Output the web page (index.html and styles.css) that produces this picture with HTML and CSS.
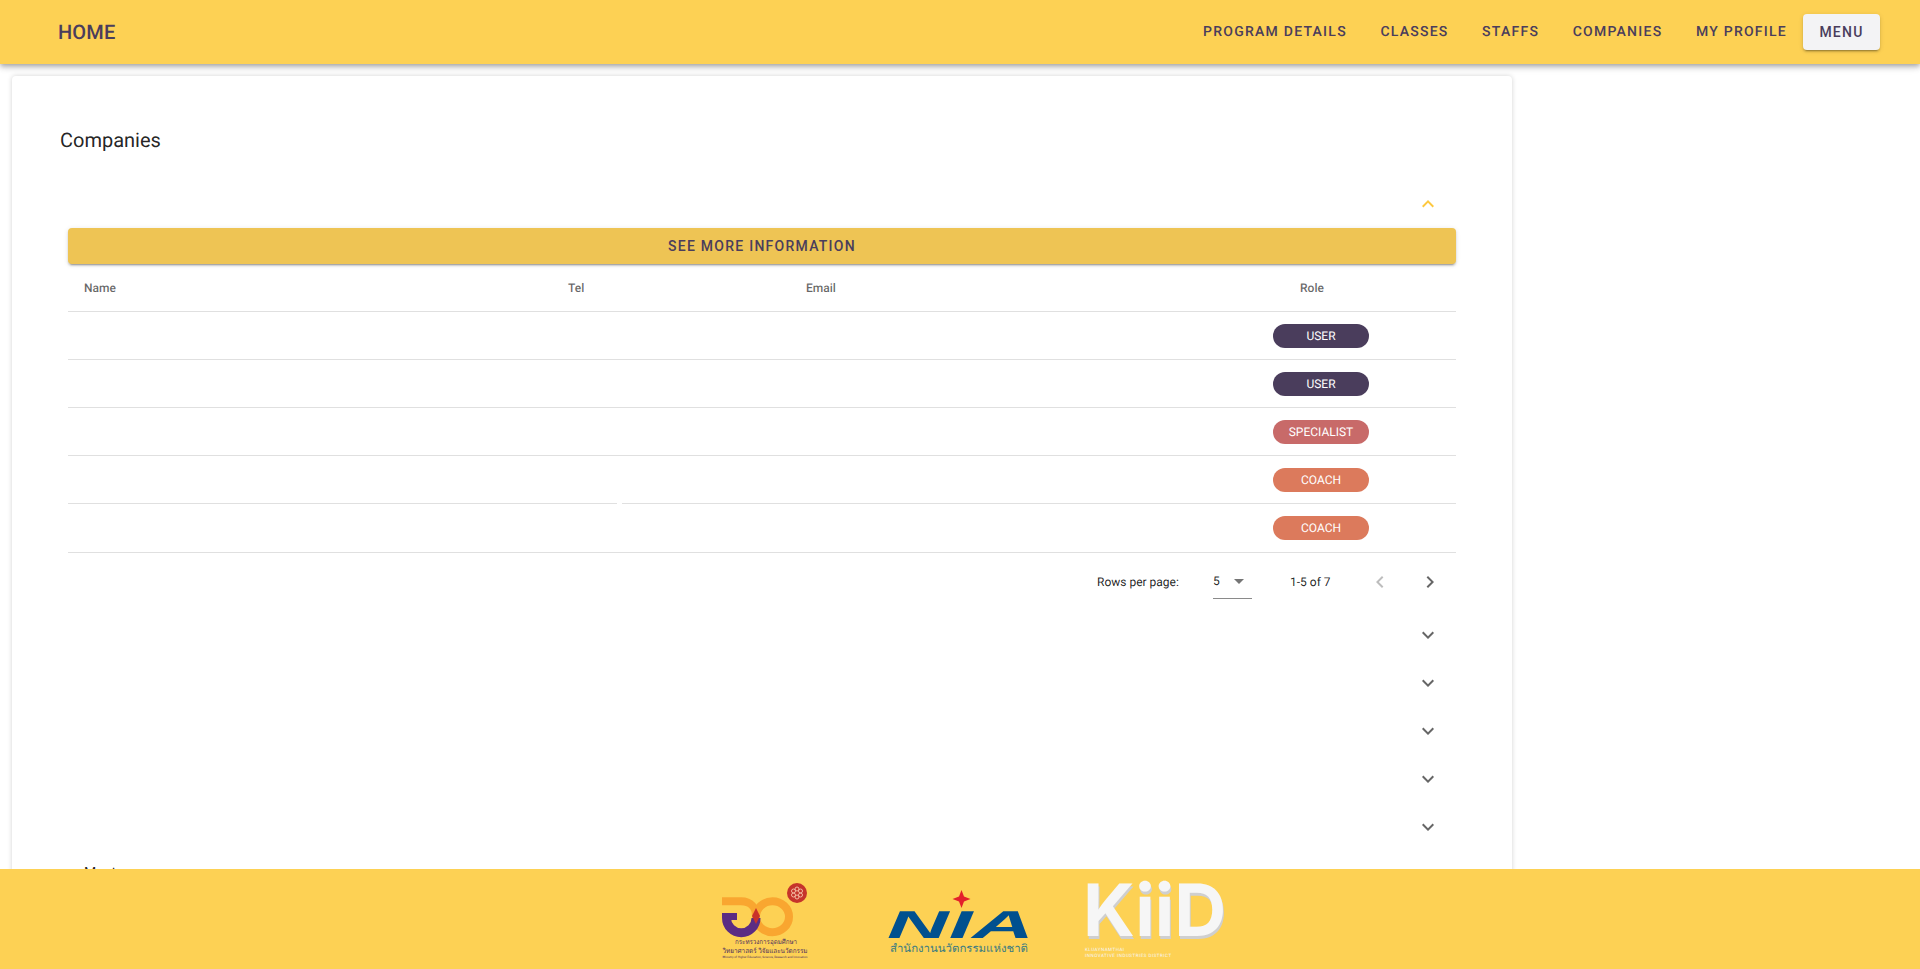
FILE: index.html

```html
<!DOCTYPE html>
<html lang="en">
<head>
  <meta charset="UTF-8" />
  <title>Companies</title>
  <link rel="stylesheet" href="styles.css">
</head>
<body>
  <div class="app">
    <header class="appbar">
      <a class="brand">HOME</a>
      <nav class="nav">
        <a>PROGRAM DETAILS</a>
        <a>CLASSES</a>
        <a>STAFFS</a>
        <a>COMPANIES</a>
        <a>MY PROFILE</a>
        <button class="menu-btn">MENU</button>
      </nav>
    </header>

    <main class="content">
      <section class="card">
        <h2 class="card-title">Companies</h2>

        <div class="acc-head">
          <svg class="chev chev-open" viewBox="0 0 24 24"><path d="M7.41 15.41 12 10.83l4.59 4.58L18 14l-6-6-6 6z"/></svg>
        </div>

        <div class="acc-body">
          <button class="more-btn">SEE MORE INFORMATION</button>
          <table class="people">
            <colgroup>
              <col class="col-name">
              <col class="col-tel">
              <col class="col-email">
              <col class="col-role">
            </colgroup>
            <thead>
              <tr><th>Name</th><th>Tel</th><th>Email</th><th class="role-head">Role</th></tr>
            </thead>
            <tbody>
              <tr><td></td><td></td><td></td><td><span class="chip chip-user">USER</span></td></tr>
              <tr><td></td><td></td><td></td><td><span class="chip chip-user">USER</span></td></tr>
              <tr><td></td><td></td><td></td><td><span class="chip chip-specialist">SPECIALIST</span></td></tr>
              <tr class="row-gap"><td></td><td></td><td></td><td><span class="chip chip-coach">COACH</span></td></tr>
              <tr><td></td><td></td><td></td><td><span class="chip chip-coach">COACH</span></td></tr>
            </tbody>
          </table>

          <div class="pager">
            <span class="pager-label">Rows per page:</span>
            <span class="pager-select">5
              <svg class="caret" viewBox="0 0 24 24"><path d="M7 10l5 5 5-5z"/></svg>
            </span>
            <span class="pager-count">1-5 of 7</span>
            <svg class="page-arrow page-off" viewBox="0 0 24 24"><path d="M15.41 7.41 14 6l-6 6 6 6 1.41-1.41L10.83 12z"/></svg>
            <svg class="page-arrow" viewBox="0 0 24 24"><path d="M10 6 8.59 7.41 13.17 12l-4.58 4.59L10 18l6-6z"/></svg>
          </div>
        </div>

        <div class="acc-head"><svg class="chev" viewBox="0 0 24 24"><path d="M16.59 8.59 12 13.17 7.41 8.59 6 10l6 6 6-6z"/></svg></div>
        <div class="acc-head"><svg class="chev" viewBox="0 0 24 24"><path d="M16.59 8.59 12 13.17 7.41 8.59 6 10l6 6 6-6z"/></svg></div>
        <div class="acc-head"><svg class="chev" viewBox="0 0 24 24"><path d="M16.59 8.59 12 13.17 7.41 8.59 6 10l6 6 6-6z"/></svg></div>
        <div class="acc-head"><svg class="chev" viewBox="0 0 24 24"><path d="M16.59 8.59 12 13.17 7.41 8.59 6 10l6 6 6-6z"/></svg></div>
        <div class="acc-head"><svg class="chev" viewBox="0 0 24 24"><path d="M16.59 8.59 12 13.17 7.41 8.59 6 10l6 6 6-6z"/></svg></div>

        <p class="next-title">Mentors</p>
      </section>
    </main>

    <footer class="footer">
      <svg class="logo-mhesi" viewBox="0 0 92 80">
        <circle cx="77" cy="13" r="10" fill="#c6342b"/>
        <g fill="none" stroke="#f3b9a0" stroke-width="1">
          <circle cx="77" cy="9" r="2"/><circle cx="73.5" cy="11" r="2"/><circle cx="80.5" cy="11" r="2"/>
          <circle cx="73.5" cy="15" r="2"/><circle cx="80.5" cy="15" r="2"/><circle cx="77" cy="17" r="2"/>
        </g>
        <ellipse cx="52.5" cy="36.7" rx="16.5" ry="15.5" fill="none" stroke="#f9a630" stroke-width="8"/>
        <path d="M2 21.3H21C31 21.3 36 28 36 36" fill="none" stroke="#f9a630" stroke-width="8"/>
        <path d="M6.5 33V38A14.5 14.5 0 0 0 36 38" fill="none" stroke="#5b2c83" stroke-width="9"/>
        <path d="M2 33H17V40H10V33Z" fill="#5b2c83"/>
        <path d="M36 28L40 36L36 44L32 36Z" fill="#c9322a"/>
        <text class="mhesi-th" x="46" y="64" textLength="62" lengthAdjust="spacingAndGlyphs">กระทรวงการอุดมศึกษา</text>
        <text class="mhesi-th" x="45" y="73" textLength="85" lengthAdjust="spacingAndGlyphs">วิทยาศาสตร์ วิจัยและนวัตกรรม</text>
        <text class="mhesi-en" x="45" y="78" textLength="85" lengthAdjust="spacingAndGlyphs">Ministry of Higher Education, Science, Research and Innovation</text>
      </svg>

      <svg class="logo-nia" viewBox="0 0 142 75">
        <path d="M73.5 6L76 12.5L82.5 15L76 17.5L73.5 24L71 17.5L64.5 15L71 12.5Z" fill="#e3212b"/>
        <text class="nia-mark" x="72.5" y="54" textLength="147" lengthAdjust="spacingAndGlyphs">NIA</text>
        <text class="nia-th" x="71" y="68" textLength="138" lengthAdjust="spacingAndGlyphs">สำนักงานนวัตกรรมแห่งชาติ</text>
      </svg>

      <div class="logo-kiid">
        <div class="kiid-mark">KiiD</div>
        <div class="kiid-sub">KLUAYNAMTHAI<br>INNOVATIVE INDUSTRIES DISTRICT</div>
      </div>
    </footer>
  </div>
</body>
</html>
```

FILE: styles.css

```css
* {
  box-sizing: border-box;
}
html, body {
  margin: 0;
  height: 100%;
  overflow: hidden;
}
body {
  font-family: Roboto, "Liberation Sans", sans-serif;
  background: #fff;
  color: rgba(0, 0, 0, 0.87);
  text-rendering: geometricPrecision;
}
.app {
  height: 100vh;
  display: flex;
  flex-direction: column;
}

/* top bar */
.appbar {
  flex: 0 0 64px;
  display: flex;
  align-items: center;
  justify-content: space-between;
  padding: 0 40px 0 58px;
  background: #fdd154;
  color: #4a3d5c;
  box-shadow: 0 2px 4px -1px rgba(0,0,0,.2), 0 4px 5px 0 rgba(0,0,0,.14), 0 1px 10px 0 rgba(0,0,0,.12);
  position: relative;
  z-index: 2;
}
.brand {
  font-size: 20px;
  font-weight: 500;
  letter-spacing: 0.15px;
}
.nav {
  display: flex;
  align-items: center;
  font-size: 14px;
  font-weight: 500;
  letter-spacing: 1.25px;
}
.nav a {
  margin-right: 33.5px;
}
.nav a:nth-child(5) {
  margin-right: 16px;
}
.menu-btn {
  width: 77px;
  height: 36px;
  border: 0;
  border-radius: 4px;
  background: #f3f3f5;
  color: #4a3d5c;
  font: 500 14px Roboto, sans-serif;
  letter-spacing: 1.25px;
  box-shadow: 0 3px 1px -2px rgba(0,0,0,.2), 0 2px 2px 0 rgba(0,0,0,.14), 0 1px 5px 0 rgba(0,0,0,.12);
}

/* main card */
.content {
  flex: 1;
  min-height: 0;
  overflow: hidden;
  padding: 12px 0 0 12px;
}
.card {
  width: 1500px;
  padding: 0 56px;
  background: #fff;
  border-radius: 4px;
  box-shadow: 0 0 5px rgba(0,0,0,.18);
}
.card-title {
  height: 104px;
  margin: 0 0 0 -8px;
  padding-top: 52px;
  font-size: 20px;
  font-weight: 400;
  line-height: 24px;
}
.acc-head {
  height: 48px;
  display: flex;
  align-items: center;
  justify-content: flex-end;
  padding-right: 16px;
}
.chev {
  width: 24px;
  height: 24px;
  fill: #666;
}
.chev-open {
  fill: #fdc83f;
}
.more-btn {
  display: block;
  width: 100%;
  height: 36px;
  border: 0;
  border-radius: 4px;
  background: #eec454;
  color: #4a3d5c;
  font: 500 14px Roboto, sans-serif;
  letter-spacing: 1.25px;
  box-shadow: 0 3px 1px -2px rgba(0,0,0,.2), 0 2px 2px 0 rgba(0,0,0,.14), 0 1px 5px 0 rgba(0,0,0,.12);
}

/* people table */
.people {
  width: 100%;
  table-layout: fixed;
  border-collapse: collapse;
}
.col-name { width: 484px; }
.col-tel { width: 238px; }
.col-email { width: 378px; }
.col-role { width: 288px; }
.people th {
  height: 47px;
  padding: 2px 16px 0;
  text-align: left;
  font-size: 12px;
  font-weight: 500;
  color: rgba(0, 0, 0, 0.6);
  border-bottom: 1px solid #e0e0e0;
}
.people th.role-head {
  text-align: center;
}
.people td {
  height: 48px;
  padding: 1px 0 0;
  border-bottom: 1px solid #e0e0e0;
}
.people td:last-child {
  padding-left: 105px;
}
.people tr:last-child td {
  height: 49px;
}
.row-gap td:first-child {
  position: relative;
}
.row-gap td:first-child::after {
  content: "";
  position: absolute;
  left: 549px;
  bottom: -1px;
  width: 5px;
  height: 1px;
  background: #fff;
}
.chip {
  display: block;
  width: 96px;
  height: 24px;
  border-radius: 12px;
  color: #fff;
  font-size: 12px;
  line-height: 24px;
  text-align: center;
}
.chip-user { background: #4a3d5c; }
.chip-specialist { background: #c86a69; }
.chip-coach { background: #dc7a5c; }

/* pagination */
.pager {
  height: 58px;
  padding-left: 1029px;
  display: flex;
  align-items: center;
  font-size: 12px;
}
.pager > * {
  flex: none;
}
.pager-label {
  width: 116px;
}
.pager-select {
  width: 39px;
  height: 34px;
  display: flex;
  align-items: center;
  justify-content: space-between;
  margin-right: 38px;
  border-bottom: 1px solid #8a8a8a;
}
.caret {
  width: 24px;
  height: 24px;
  margin-right: 1px;
  fill: #757575;
}
.pager-count {
  width: 78px;
}
.page-arrow {
  width: 24px;
  height: 24px;
  fill: #666;
}
.page-off {
  fill: #bdbdbd;
  margin-right: 26px;
}
.next-title {
  margin: 12px 0 0 16px;
  font-size: 14px;
  line-height: 20px;
}

/* footer logos */
.footer {
  flex: 0 0 100px;
  display: flex;
  align-items: flex-start;
  padding: 11px 0 0 720px;
  background: #fdd154;
  position: relative;
  z-index: 1;
}
.footer svg {
  overflow: visible;
}
.logo-mhesi {
  width: 92px;
  height: 80px;
  margin-right: 76px;
  flex: none;
}
.mhesi-th {
  font: 6.5px "Noto Sans", "DejaVu Sans", sans-serif;
  fill: #4c2d5e;
  text-anchor: middle;
}
.mhesi-en {
  font: 3px Roboto, sans-serif;
  fill: #4c2d5e;
  text-anchor: middle;
}
.logo-nia {
  width: 142px;
  height: 75px;
  margin-top: 4px;
  margin-right: 53px;
  flex: none;
}
.nia-mark {
  font: italic 700 39px "Liberation Sans", sans-serif;
  fill: #00508f;
  text-anchor: middle;
}
.nia-th {
  font: 11px "Noto Sans", "DejaVu Sans", sans-serif;
  fill: #3a7b82;
  text-anchor: middle;
}
.logo-kiid {
  width: 142px;
  color: #f6f6f6;
}
.kiid-mark {
  font: 700 72px/62px Inter, sans-serif;
  text-shadow: 1px 3px 0 #cfcfcf;
}
.kiid-sub {
  margin: 6px 0 0 2px;
  font-size: 4.5px;
  line-height: 6px;
  letter-spacing: 0.5px;
}
```
